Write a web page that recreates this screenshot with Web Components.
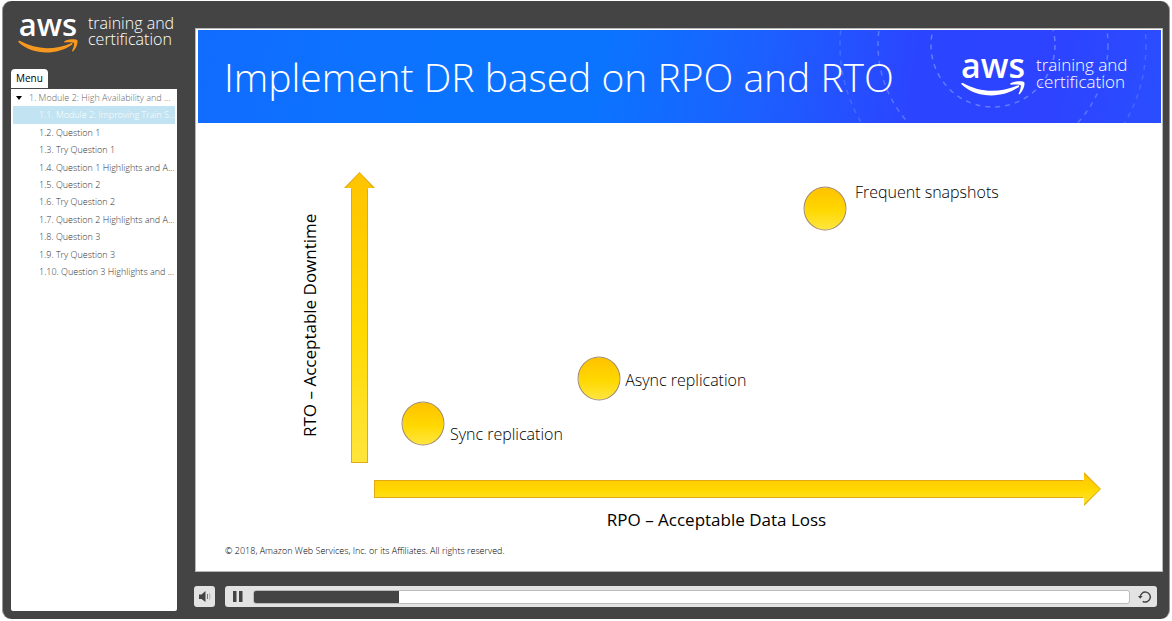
<!DOCTYPE html>
<html lang="en">
<head>
<meta charset="utf-8">
<meta name="viewport" content="width=device-width, initial-scale=1">
<title>AWS Training and Certification</title>
<style>
  html { height: 100%; }
  body { margin: 0; min-height: 100%; display: grid; background: #fff; font-family: "Open Sans", "Noto Sans", sans-serif; }
</style>
</head>
<body>
<course-player></course-player>

<script>
const define = (name, html) => {
  const template = document.createElement('template');
  template.innerHTML = html;
  customElements.define(name, class extends HTMLElement {
    constructor() {
      super();
      this.attachShadow({ mode: 'open' }).append(template.content.cloneNode(true));
    }
  });
};

define('aws-logo', `
<style>
  :host { display: flex; align-items: flex-start; gap: 10px; color: #fff; --smile: #f7981f; }
  .mark { display: grid; width: 60px; justify-items: center; }
  .aws { font-size: 31px; line-height: 18px; height: 24px; font-weight: 600; }
  svg { width: 60px; height: 15px; display: block; }
  .words { width: 92px; font-size: 16px; line-height: 16px; font-weight: 300; }
  :host([size="large"]) { --smile: #fff; }
  :host([size="large"]) .mark { width: 66px; }
  :host([size="large"]) svg { width: 66px; height: 16px; }
  :host([size="large"]) .aws { font-size: 34px; line-height: 18px; height: 25px; }
  :host([size="large"]) .words { font-size: 17px; line-height: 17px; }
</style>
<div class="mark">
  <span class="aws">aws</span>
  <svg viewBox="0 0 60 15" aria-hidden="true" fill="var(--smile)">
    <path d="M.4 2.2C.8 1.6 1.5 1.7 2.2 2.1C18 11 36 11.200 53 4.200C54.400 3.600 55.200 4.900 54 5.800C38 17 14 16 .6 3.300C.2 2.900.2 2.500.4 2.200Z"/>
    <path d="M46.500 2.200C50 -.2 58 -.3 59.200 1.100C60.400 2.700 58.600 8.800 55.200 12.200C54.600 12.800 53.800 12.500 54.100 11.700C55.200 9.300 56.600 5.100 55.900 4.100C55.100 3.100 50 3.100 47 3.400C46.100 3.500 45.800 2.700 46.500 2.200Z"/>
  </svg>
</div>
<div class="words">training and certification</div>`);

define('menu-item', `
<style>
  :host { display: grid; min-width: 0; color: #333; }
  a { display: flex; align-items: center; margin: 0 2px; padding-left: 26px; color: inherit; text-decoration: none; font-size: 9px; line-height: 16px; font-weight: 300; white-space: nowrap; overflow: hidden; }
  svg { width: 6px; height: 4px; margin-right: 7px; display: none; }
  :host([group]) { color: #666; }
  :host([group]) a { padding-left: 3px; }
  :host([group]) svg { display: block; }
  :host([current]) { color: #fff; }
  :host([current]) a { background: #c2e3f1; }
</style>
<a href="#"><svg viewBox="0 0 6 4" aria-hidden="true"><path d="M0 0h6L3 4z" fill="#000"/></svg><slot></slot></a>`);

define('course-menu', `
<style>
  :host { display: flex; flex-direction: column; align-items: stretch; }
  button { align-self: flex-start; margin: 0 0 1px; padding: 0 5px; height: 19px; border: 0; border-radius: 4px 4px 0 0; background: #fff; color: #000; font: 400 10px/19px "Open Sans", sans-serif; }
  nav { flex: 1; background: #fff; border-radius: 0 0 2px 2px; }
  .list { display: grid; grid-auto-rows: 1fr; height: 192px; }
</style>
<button type="button" aria-expanded="true">Menu</button>
<nav aria-label="Course"><div class="list"><slot></slot></div></nav>`);

define('slide-header', `
<style>
  :host { display: flex; align-items: center; justify-content: space-between; position: relative; overflow: hidden; height: 93px; padding: 0 33px 0 26px; box-sizing: border-box; color: #fff;
    background: linear-gradient(100deg, #116cff 0%, #0b74ff 25%, #0b74ff 42%, #1c60ff 58%, #2b45ff 74%, #2d43ff 88%, #2a4eff 100%); }
  .rings { position: absolute; right: 0; top: 0; width: 330px; height: 94px; }
  h1 { margin: 0; font-size: 39px; line-height: 52px; font-weight: 300; white-space: nowrap; position: relative; }
  aws-logo { position: relative; }
</style>
<svg class="rings" viewBox="0 0 330 94" fill="none" stroke="#8aa2ff" stroke-dasharray="5 5" stroke-width="1.500" aria-hidden="true">
  <circle cx="162" cy="15" r="62" opacity=".6"/>
  <circle cx="162" cy="15" r="115" opacity=".5"/>
  <circle cx="162" cy="15" r="153" opacity=".3"/>
</svg>
<h1><slot></slot></h1>
<aws-logo size="large"></aws-logo>`);

define('axis-arrow', `
<style>
  :host { display: grid; background: #e0ab12; }
  i { margin: 1px; display: block; background: linear-gradient(#ffc400, #ffd900 55%, #ffe53c); }
  :host([direction="up"]), :host([direction="up"]) i { clip-path: polygon(50% 0, 100% 16px, calc(100% - 7px) 16px, calc(100% - 7px) 100%, 7px 100%, 7px 16px, 0 16px); }
  :host([direction="right"]), :host([direction="right"]) i { clip-path: polygon(100% 50%, calc(100% - 17px) 100%, calc(100% - 17px) calc(100% - 8px), 0 calc(100% - 8px), 0 8px, calc(100% - 17px) 8px, calc(100% - 17px) 0); }
</style><i></i>`);

define('plot-point', `
<style>
  :host { position: absolute; left: var(--x); top: var(--y); width: 43px; height: 43px; transform: translate(-50%, -50%); }
  i { display: block; width: 43px; height: 44px; box-sizing: border-box; border: 1px solid #a08a70; border-radius: 50%; background: linear-gradient(#ffc200, #ffd800 55%, #ffe640); }
  span { position: absolute; left: var(--dx, 48px); top: var(--dy, 12px); font-size: 16px; line-height: 22px; font-weight: 300; color: #000; white-space: nowrap; }
</style><i></i><span><slot></slot></span>`);

define('dr-chart', `
<style>
  :host { display: grid; grid-template-columns: 22px 31px 1fr; grid-template-rows: minmax(291px, 1fr) 34px 24px; column-gap: 23px; padding: 49px 60px 0 101px; }
  .ylabel { writing-mode: vertical-rl; transform: rotate(180deg); text-align: center; line-height: 22px; padding-bottom: 16px; }
  .ylabel, .xlabel { font-size: 17px; font-weight: 500; color: #000; white-space: nowrap; }
  .plot { position: relative; margin-left: -24px; }
  .x { grid-column: 3; margin: 9px 0 -9px -24px; }
  .xlabel { grid-column: 3; line-height: 24px; padding-top: 11px; margin-left: -66px; text-align: center; }
</style>
<div class="ylabel">RTO – Acceptable Downtime</div>
<axis-arrow direction="up"></axis-arrow>
<div class="plot"><slot></slot></div>
<axis-arrow class="x" direction="right"></axis-arrow>
<div class="xlabel">RPO – Acceptable Data Loss</div>`);

define('course-slide', `
<style>
  :host { display: flex; flex-direction: column; background: #fff; border: 1px solid #b8b8b8; padding: 1px 1px 0 2px; box-sizing: border-box; }
  dr-chart { flex: 1; }
  footer { padding: 22px 27px 12px; font-size: 9px; line-height: 16px; font-weight: 300; color: #000; }
</style>
<slide-header>Implement DR based on RPO and RTO</slide-header>
<dr-chart>
  <plot-point style="--x:62.100%;--y:12.400%;--dx:51px;--dy:-6px">Frequent snapshots</plot-point>
  <plot-point style="--x:30.900%;--y:70.700%">Async replication</plot-point>
  <plot-point style="--x:6.800%;--y:86.400%;--dy:21px">Sync replication</plot-point>
</dr-chart>
<footer>© 2018, Amazon Web Services, Inc. or its Affiliates. All rights reserved.</footer>`);

define('player-controls', `
<style>
  :host { display: flex; gap: 10px; height: 21px; }
  button { border: 0; padding: 0; background: none; display: grid; place-items: center; width: 21px; height: 21px; }
  svg { display: block; }
  .volume, .bar { background: #e3e3e3; border-radius: 3px; }
  .bar { flex: 1; display: flex; align-items: center; padding: 0 2px; }
  .pause { width: 22px; margin-right: 4px; }
  input { appearance: none; -webkit-appearance: none; flex: 1; min-width: 0; height: 14px; margin: 0; box-sizing: border-box; border: 1px solid #bbb; border-radius: 3px; background: linear-gradient(90deg, #444 0 16.600%, #fff 16.600%); }
  input::-webkit-slider-thumb { appearance: none; -webkit-appearance: none; width: 1px; height: 12px; background: none; }
  .replay { margin-left: 4px; }
</style>
<button class="volume" type="button" aria-label="Volume"><svg width="13" height="13" viewBox="0 0 13 13"><path d="M1 4.500h2.500l4-3.500v11L3.500 9H1z" fill="#444"/><path d="M9.500 4v5" stroke="#777"/><path d="M11.500 3.500q1 3 0 6" stroke="#aaa" fill="none"/></svg></button>
<div class="bar">
  <button class="pause" type="button" aria-label="Pause"><svg width="10" height="11" viewBox="0 0 10 11" fill="#444"><path d="M0 0h3.500v11H0zM6 0h3.500v11H6z"/></svg></button>
  <input type="range" min="0" max="1000" value="166" aria-label="Seek">
  <button class="replay" type="button" aria-label="Replay"><svg width="14" height="14" viewBox="0 0 14 14"><path d="M2.300 8V7a5 5 0 1 1 2.400 4.300" fill="none" stroke="#444" stroke-width="1.400"/><path d="M0 6h4.600L2.300 8.800z" fill="#444"/></svg></button>
</div>`);

define('course-player', `
<style>
  :host { display: grid; grid-template-columns: 166px minmax(0, 1fr); column-gap: 18px; margin: 1px 2px 2px 2px; padding: 0 6px 0 8px; border: solid #999; border-width: 0 1px; border-radius: 9px; background: #444; }
  aside { display: flex; flex-direction: column; padding-bottom: 8px; }
  aside aws-logo { padding: 14px 0 15px 7px; }
  course-menu { flex: 1; }
  main { display: flex; flex-direction: column; padding: 27px 0 12px; }
  course-slide { flex: 1; }
  player-controls { margin: 14px 6px 0 -1px; }
</style>
<aside>
  <aws-logo></aws-logo>
  <course-menu>
    <menu-item group>1. Module 2: High Availability and ...</menu-item>
    <menu-item current>1.1. Module 2: Improving Train S...</menu-item>
    <menu-item>1.2. Question 1</menu-item>
    <menu-item>1.3. Try Question 1</menu-item>
    <menu-item>1.4. Question 1 Highlights and A...</menu-item>
    <menu-item>1.5. Question 2</menu-item>
    <menu-item>1.6. Try Question 2</menu-item>
    <menu-item>1.7. Question 2 Highlights and A...</menu-item>
    <menu-item>1.8. Question 3</menu-item>
    <menu-item>1.9. Try Question 3</menu-item>
    <menu-item>1.10. Question 3 Highlights and ...</menu-item>
  </course-menu>
</aside>
<main>
  <course-slide></course-slide>
  <player-controls></player-controls>
</main>`);
</script>
</body>
</html>
